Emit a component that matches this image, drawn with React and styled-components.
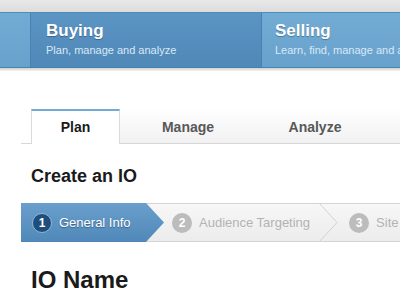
import React from 'react';
import styled, { createGlobalStyle } from 'styled-components';

const GlobalStyle = createGlobalStyle`
  html, body {
    margin: 0;
    padding: 0;
    background: #ffffff;
    overflow: hidden;
  }
  body {
    font-family: "Liberation Sans", Arial, Helvetica, sans-serif;
  }
`;

const Page = styled.div`
  width: 400px;
  height: 300px;
  overflow: hidden;
`;

const TopStrip = styled.div`
  height: 12px;
  background: linear-gradient(#e9e9e9, #dcdcdc);
`;

const NavBar = styled.nav`
  display: grid;
  grid-template-columns: 30px 231px 1fr;
  height: 56px;
  box-sizing: border-box;
  border-top: 1px solid #5289b8;
  border-bottom: 1px solid #4b81ae;
`;

const NavItem = styled.div`
  box-sizing: border-box;
  padding: 8px 0 0 ${p => p.$pad || 0}px;
  background: ${p => (p.$active
    ? 'linear-gradient(#5b95c4, #5088b8)'
    : 'linear-gradient(#72acd5, #68a2cc)')};
  border-left: 1px solid ${p => (p.$first ? 'transparent' : '#4a81b0')};
  white-space: nowrap;
  overflow: hidden;
`;

const NavTitle = styled.div`
  color: #ffffff;
  font-size: 17px;
  font-weight: bold;
  line-height: 20px;
  text-shadow: 0 1px 1px rgba(0, 0, 0, 0.3);
`;

const NavSub = styled.div`
  color: #d8e9f6;
  font-size: 11px;
  line-height: 14px;
  margin-top: 2px;
`;

const NavShadow = styled.div`
  height: 3px;
  background: linear-gradient(#cfcfcf, #f4f4f4);
`;

const Main = styled.main`
  padding: 38px 0 0 21px;
`;

const TabBar = styled.div`
  display: flex;
  width: 520px;
  height: 35px;
  box-sizing: border-box;
  border-bottom: 1px solid #d6d6d6;
  padding-left: 10px;
`;

const Tab = styled.div`
  width: ${p => p.$w}px;
  box-sizing: border-box;
  display: flex;
  align-items: center;
  justify-content: center;
  font-size: 14px;
  font-weight: bold;
  color: ${p => (p.$active ? '#1a1a1a' : '#585858')};
  background: ${p => (p.$active ? '#ffffff' : 'linear-gradient(#ffffff, #f1f1f1)')};
  background-origin: border-box;
  border-top: 2px solid ${p => (p.$active ? '#72abd8' : 'transparent')};
  border-left: 1px solid ${p => (p.$active ? '#dadada' : 'transparent')};
  border-right: 1px solid ${p => (p.$active ? '#dadada' : 'transparent')};
  margin-bottom: ${p => (p.$active ? '-1px' : '0')};
  padding-bottom: ${p => (p.$active ? '1px' : '0')};
`;

const TabFill = styled.div`
  flex: 1;
  background: linear-gradient(#ffffff, #f1f1f1);
`;

const Heading = styled.h2`
  margin: 0;
  padding: 21px 0 0 10px;
  font-size: 18px;
  line-height: 22px;
  font-weight: bold;
  color: #1a1a1a;
`;

const Steps = styled.div`
  display: flex;
  align-items: center;
  width: 560px;
  height: 39px;
  margin-top: 16px;
  box-sizing: border-box;
  border: 1px solid #d4d4d4;
  background: linear-gradient(#f7f7f7, #ececec);
`;

const ActiveStep = styled.div`
  display: flex;
  align-items: center;
  gap: 7px;
  align-self: stretch;
  margin: -1px 0 -1px -1px;
  width: 143px;
  box-sizing: border-box;
  padding-left: 11px;
  color: #ffffff;
  font-size: 13px;
  text-shadow: 0 1px 1px rgba(0, 0, 0, 0.35);
  background: linear-gradient(#6a9fcc, #4f88b9);
  clip-path: polygon(0 0, calc(100% - 18px) 0, 100% 50%, calc(100% - 18px) 100%, 0 100%);
`;

const Step = styled.div`
  display: flex;
  align-items: center;
  gap: 7px;
  padding-left: ${p => p.$pad}px;
  color: #b3b3b3;
  font-size: 13px;
  white-space: nowrap;
`;

const Num = styled.span`
  width: 20px;
  height: 20px;
  border-radius: 50%;
  display: inline-flex;
  align-items: center;
  justify-content: center;
  font-size: 12px;
  font-weight: bold;
  color: #ffffff;
  text-shadow: none;
  box-sizing: border-box;
  background: ${p => (p.$active ? '#1f4e7b' : '#bcbcbc')};
  border: ${p => (p.$active ? '1px solid #8fb7da' : 'none')};
`;

const Chevron = styled.svg`
  flex: none;
  margin-left: 8px;
`;

const FieldTitle = styled.h1`
  margin: 0;
  padding: 24px 0 0 10px;
  font-size: 24px;
  line-height: 28px;
  font-weight: bold;
  color: #1a1a1a;
`;

export default function App() {
  return (
    <Page>
      <GlobalStyle />
      <TopStrip />
      <NavBar>
        <NavItem $first />
        <NavItem $active $pad={15}>
          <NavTitle>Buying</NavTitle>
          <NavSub>Plan, manage and analyze</NavSub>
        </NavItem>
        <NavItem $pad={13}>
          <NavTitle>Selling</NavTitle>
          <NavSub>Learn, find, manage and analyze</NavSub>
        </NavItem>
      </NavBar>
      <NavShadow />
      <Main>
        <TabBar>
          <Tab $active $w={89}>Plan</Tab>
          <Tab $w={136}>Manage</Tab>
          <Tab $w={118}>Analyze</Tab>
          <TabFill />
        </TabBar>
        <Heading>Create an IO</Heading>
        <Steps>
          <ActiveStep>
            <Num $active>1</Num>
            General Info
          </ActiveStep>
          <Step $pad={8}>
            <Num>2</Num>
            Audience Targeting
          </Step>
          <Chevron width="20" height="39" viewBox="0 0 20 39">
            <path d="M1 0 L19 19.5 L1 39" fill="none" stroke="#d2d2d2" strokeWidth="1" />
          </Chevron>
          <Step $pad={11}>
            <Num>3</Num>
            Site Selection
          </Step>
        </Steps>
        <FieldTitle>IO Name</FieldTitle>
      </Main>
    </Page>
  );
}
